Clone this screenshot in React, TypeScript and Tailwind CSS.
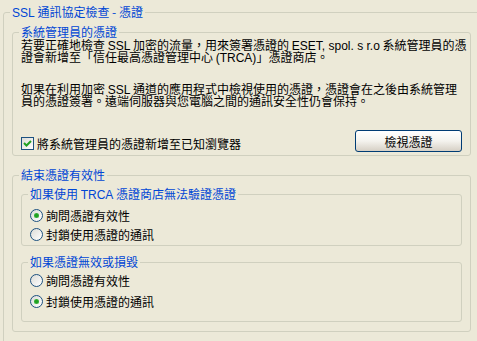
import { ReactNode } from 'react';

// Latin runs in the original are a narrow bitmap face; keep them narrower than the CJK glyphs
const latin = "font-['Liberation_Sans_Narrow','Liberation_Sans',sans-serif] leading-[12px]";

function Group({ title, className, children }: { title: ReactNode; className: string; children: ReactNode }) {
  return (
    <fieldset className={`border border-[#D0D0BF] rounded-[3px] min-w-0 ${className}`}>
      <legend className="ml-[6px] px-[2px] h-[12px] leading-[12px] text-[#0046D5] whitespace-nowrap">{title}</legend>
      {children}
    </fieldset>
  );
}

function CheckBox({ checked }: { checked: boolean }) {
  return (
    <div className="w-[13px] h-[13px] border border-[#1C5180] bg-gradient-to-br from-[#DCDCD7] to-white flex items-center justify-center shrink-0">
      {checked && (
        <svg width="9" height="9" viewBox="0 0 9 9">
          <path d="M1 4 L3.5 6.5 L8 2" fill="none" stroke="#21A121" strokeWidth="2" />
        </svg>
      )}
    </div>
  );
}

function Radio({ label, checked }: { label: string; checked: boolean }) {
  return (
    <div className="flex items-center gap-[3px]">
      <div className="w-[13px] h-[13px] rounded-full border border-[#1C5180] bg-gradient-to-br from-[#DCDCD7] to-white flex items-center justify-center shrink-0">
        {checked && <div className="w-[5px] h-[5px] rounded-full bg-[#21A121] shadow-[inset_0_0_1px_#8BE08B]" />}
      </div>
      <span>{label}</span>
    </div>
  );
}

function Line({ children }: { children: ReactNode }) {
  return <div className="h-[12px] leading-[12px] whitespace-nowrap">{children}</div>;
}

export default function App() {
  return (
    <div className="w-[477px] h-[341px] overflow-hidden bg-[#ECE9D8] text-black text-[12px] leading-[13px] font-['Noto_Sans_CJK_TC',sans-serif]">
      <Group
        className="ml-[3px] mt-[6px] w-[490px] pb-[40px]"
        title={<><span className={latin}>SSL</span> 通訊協定檢查 - 憑證</>}
      >
        {/* Administrator certificate */}
        <Group className="ml-[8px] mt-[8px] w-[459px] pb-[3px]" title="系統管理員的憑證">
          <div className="pl-[8px] mt-[1px]">
            <Line>若要正確地檢查 <span className={latin}>SSL</span> 加密的流量，用來簽署憑證的 <span className={latin}>ESET, spol. s r.o</span> 系統管理員的憑</Line>
            <Line>證會新增至「信任最高憑證管理中心 <span className={latin}>(TRCA)</span>」憑證商店。</Line>
          </div>
          <div className="pl-[8px] mt-[20px]">
            <Line>如果在利用加密 <span className={latin}>SSL</span> 通道的應用程式中檢視使用的憑證，憑證會在之後由系統管理</Line>
            <Line>員的憑證簽署。遠端伺服器與您電腦之間的通訊安全性仍會保持。</Line>
          </div>
          <div className="flex justify-between items-start pl-[8px] pr-[8px] mt-[23px] h-[22px]">
            <div className="flex items-center gap-[3px] mt-[7px] h-[13px]">
              <CheckBox checked />
              <span>將系統管理員的憑證新增至已知瀏覽器</span>
            </div>
            <button className="w-[107px] h-[22px] border border-[#003C74] rounded-[3px] bg-gradient-to-b from-white via-[#F4F3EE] to-[#D6D0C5] flex items-center justify-center">
              檢視憑證
            </button>
          </div>
        </Group>

        {/* End of certificate validity */}
        <Group className="ml-[8px] mt-[13px] w-[459px] pb-[9px]" title="結束憑證有效性">
          <Group
            className="ml-[8px] mt-[7px] w-[441px] pb-[1px]"
            title={<>如果使用 <span className={latin}>TRCA</span> 憑證商店無法驗證憑證</>}
          >
            <div className="pl-[8px] mt-[6px]">
              <div className="h-[19px] flex items-center"><Radio label="詢問憑證有效性" checked /></div>
              <div className="h-[19px] flex items-center"><Radio label="封鎖使用憑證的通訊" checked={false} /></div>
            </div>
          </Group>
          <Group className="ml-[8px] mt-[10px] w-[441px] pb-[9px]" title="如果憑證無效或損毀">
            <div className="pl-[8px] mt-[2px]">
              <div className="h-[21px] flex items-center"><Radio label="詢問憑證有效性" checked={false} /></div>
              <div className="h-[21px] flex items-center"><Radio label="封鎖使用憑證的通訊" checked /></div>
            </div>
          </Group>
        </Group>
      </Group>
    </div>
  );
}
